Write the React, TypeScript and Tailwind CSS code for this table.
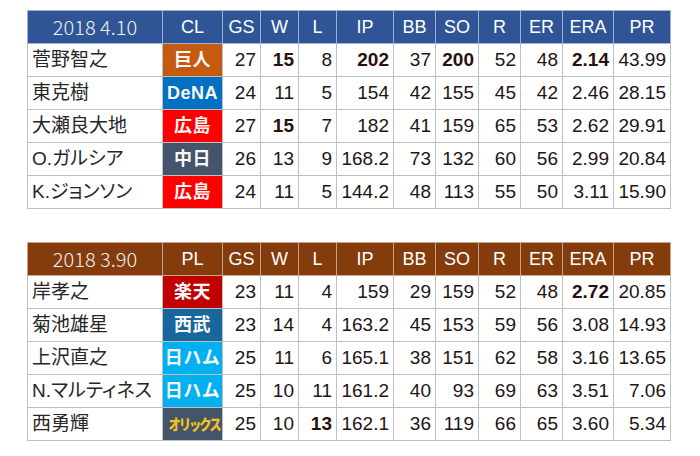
import React from "react";

type Row = {
  name: string;
  team: string;
  teamBg: string;
  teamText?: string;
  vals: (string | [string, boolean])[];
};

const cols = [135, 60, 38, 38, 38, 57, 42, 43, 42, 42, 51, 57];
const heads = ["GS", "W", "L", "IP", "BB", "SO", "R", "ER", "ERA", "PR"];

const t1: Row[] = [
  { name: "菅野智之", team: "巨人", teamBg: "bg-[#c55a11]", vals: ["27", ["15", true], "8", ["202", true], "37", ["200", true], "52", "48", ["2.14", true], "43.99"] },
  { name: "東克樹", team: "DeNA", teamBg: "bg-[#0070c0]", vals: ["24", "11", "5", "154", "42", "155", "45", "42", "2.46", "28.15"] },
  { name: "大瀬良大地", team: "広島", teamBg: "bg-[#ff0000]", vals: ["27", ["15", true], "7", "182", "41", "159", "65", "53", "2.62", "29.91"] },
  { name: "O.ガルシア", team: "中日", teamBg: "bg-[#44546a]", vals: ["26", "13", "9", "168.2", "73", "132", "60", "56", "2.99", "20.84"] },
  { name: "K.ジョンソン", team: "広島", teamBg: "bg-[#ff0000]", vals: ["24", "11", "5", "144.2", "48", "113", "55", "50", "3.11", "15.90"] },
];

const t2: Row[] = [
  { name: "岸孝之", team: "楽天", teamBg: "bg-[#c00000]", vals: ["23", "11", "4", "159", "29", "159", "52", "48", ["2.72", true], "20.85"] },
  { name: "菊池雄星", team: "西武", teamBg: "bg-[#17669c]", vals: ["23", "14", "4", "163.2", "45", "153", "59", "56", "3.08", "14.93"] },
  { name: "上沢直之", team: "日ハム", teamBg: "bg-[#00b0f0]", vals: ["25", "11", "6", "165.1", "38", "151", "62", "58", "3.16", "13.65"] },
  { name: "N.マルティネス", team: "日ハム", teamBg: "bg-[#00b0f0]", vals: ["25", "10", "11", "161.2", "40", "93", "69", "63", "3.51", "7.06"] },
  { name: "西勇輝", team: "オリックス", teamBg: "bg-[#44546a]", teamText: "orix", vals: ["25", "10", ["13", true], "162.1", "36", "119", "66", "65", "3.60", "5.34"] },
];

function Table({ title, league, headBg, headBorder, rows }: { title: string; league: string; headBg: string; headBorder: string; rows: Row[] }) {
  return (
    <table className="table-fixed border-collapse" style={{ width: 643 }}>
      <colgroup>
        {cols.map((w, i) => (
          <col key={i} style={{ width: w }} />
        ))}
      </colgroup>
      <thead>
        <tr className={`h-[33px] ${headBg} text-white`}>
          <th className={`border ${headBorder} font-light text-[20px] text-center p-0 font-['Noto_Sans_CJK_JP',sans-serif] text-[#f0f0f0]`}>{title}</th>
          <th className={`border ${headBorder} font-normal text-[18px] text-center p-0 font-['Liberation_Sans',sans-serif]`}>{league}</th>
          {heads.map((h) => (
            <th key={h} className={`border ${headBorder} font-normal text-[18px] text-center p-0 font-['Liberation_Sans',sans-serif]`}>
              {h}
            </th>
          ))}
        </tr>
      </thead>
      <tbody>
        {rows.map((r, i) => (
          <tr key={i} className="h-[33px]">
            <td className="border border-[#bfbfbf] pl-[4px] text-left text-[19px] text-[#262626] whitespace-nowrap font-['Liberation_Sans','Noto_Sans_CJK_JP',sans-serif] p-0 [font-feature-settings:'palt']">
              {r.name}
            </td>
            <td className={`border border-[#bfbfbf] ${r.teamBg} text-center p-0 font-bold whitespace-nowrap overflow-hidden`}>
              {r.teamText === "orix" ? (
                <span className="inline-block whitespace-nowrap text-[15px] leading-[20px] text-[#f2c31b] font-['Noto_Sans_CJK_JP',sans-serif] font-black tracking-[-2.5px] scale-x-[0.82]">オリックス</span>
              ) : (
                <span className="text-[18px] text-[#f8f8f8] tracking-[0.5px] font-['Liberation_Sans','Noto_Sans_CJK_JP',sans-serif]">{r.team}</span>
              )}
            </td>
            {r.vals.map((v, j) => {
              const [text, bold] = typeof v === "string" ? [v, false] : v;
              return (
                <td
                  key={j}
                  className={`border border-[#bfbfbf] text-right pr-[4px] p-0 text-[19px] font-['Liberation_Sans',sans-serif] ${bold ? "font-bold text-[#2a0f0f]" : "text-[#231414]"}`}
                >
                  {text}
                </td>
              );
            })}
          </tr>
        ))}
      </tbody>
    </table>
  );
}

export default function App() {
  return (
    <div className="w-[700px] h-[456px] bg-white pt-[10px] pl-[27px] flex flex-col gap-[33px]">
      <Table title="2018 4.10" league="CL" headBg="bg-[#2f5597]" headBorder="border-[#9fb3d9]" rows={t1} />
      <Table title="2018 3.90" league="PL" headBg="bg-[#843c0c]" headBorder="border-[#c9a48c]" rows={t2} />
    </div>
  );
}
